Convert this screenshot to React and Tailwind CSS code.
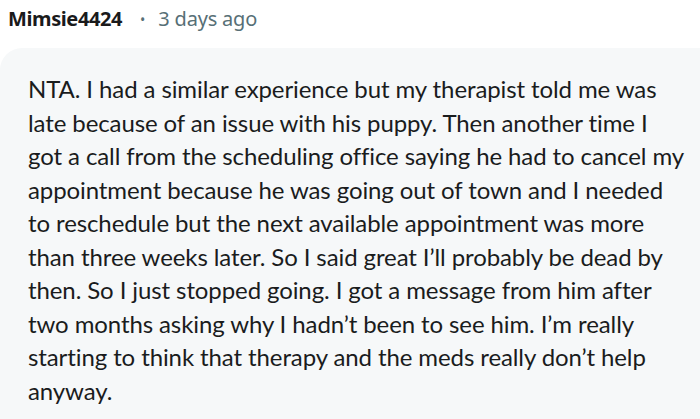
const lines = [
  'NTA. I had a similar experience but my therapist told me was',
  'late because of an issue with his puppy. Then another time I',
  'got a call from the scheduling office saying he had to cancel my',
  'appointment because he was going out of town and I needed',
  'to reschedule but the next available appointment was more',
  'than three weeks later. So I said great I\u2019ll probably be dead by',
  'then. So I just stopped going. I got a message from him after',
  'two months asking why I hadn\u2019t been to see him. I\u2019m really',
  'starting to think that therapy and the meds really don\u2019t help',
  'anyway.',
]

export default function App() {
  return (
    <div className="w-[700px] h-[419px] overflow-hidden bg-white font-['Noto_Sans',sans-serif]">
      {/* Comment header */}
      <div className="flex items-center h-[40px] pl-[8px] pb-[2px]">
        <span className="text-[20px] font-bold text-[#1a1a1b] tracking-[-0.4px]">Mimsie4424</span>
        <span className="ml-[18px] mr-[13px] text-[14px] text-[#576f76]">•</span>
        <span className="text-[20px] text-[#576f76] tracking-[-0.2px]">3 days ago</span>
      </div>

      {/* Comment body */}
      <div className="mt-[8px] w-[740px] bg-[#f6f8f9] rounded-tl-[22px] pl-[28px] pt-[24px] pb-[20px]">
        <p className="font-['Lato',sans-serif] text-[24px] leading-[33.5px] text-[#1a1c1d] tracking-[-0.1px]">
          {lines.map((l, i) => (
            <span key={i} className="block whitespace-nowrap">{l}</span>
          ))}
        </p>
      </div>
    </div>
  )
}
